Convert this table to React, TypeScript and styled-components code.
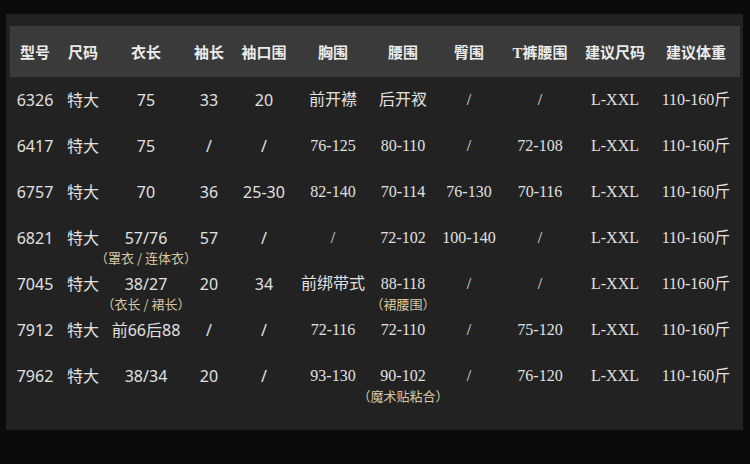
import React from 'react';
import styled, { createGlobalStyle } from 'styled-components';

const GlobalStyle = createGlobalStyle`
  html, body {
    margin: 0;
    padding: 0;
    background: #0b0b0b;
  }
  body {
    width: 750px;
    height: 464px;
    overflow: hidden;
  }
`;

const Page = styled.div`
  width: 750px;
  height: 464px;
  padding: 14px 7px 0 6px;
  box-sizing: border-box;
`;

const Panel = styled.div`
  width: 737px;
  height: 416px;
  background: #222222;
  padding: 12px 3px 0 4px;
  box-sizing: border-box;
`;

const COLS = '50px 46px 80px 46px 64px 74px 66px 66px 76px 74px 88px';

const HeaderRow = styled.div`
  display: grid;
  grid-template-columns: ${COLS};
  height: 51px;
  align-items: center;
  background: #3a3a3a;
`;

const HeaderCell = styled.div`
  text-align: center;
  white-space: nowrap;
  font-family: 'Liberation Serif', 'Noto Sans CJK SC', serif;
  font-weight: 700;
  font-size: 15px;
  color: #ececec;
`;

const Row = styled.div`
  display: grid;
  grid-template-columns: ${COLS};
  height: 46px;
`;

const Cell = styled.div<{ $serif?: boolean }>`
  display: flex;
  flex-direction: column;
  align-items: center;
  padding-top: 12px;
  white-space: nowrap;
  font-family: ${(p) =>
    p.$serif
      ? "'Liberation Serif', 'Noto Sans CJK SC', serif"
      : "'Noto Sans', 'Noto Sans CJK SC', sans-serif"};
  font-size: 16px;
  line-height: 22px;
  color: #e0e0e0;
`;

const Note = styled.span`
  margin-top: 1px;
  font-family: 'Noto Sans CJK SC', sans-serif;
  font-size: 13px;
  line-height: 15px;
  color: #d6c8a6;
`;

const headers = ['型号', '尺码', '衣长', '袖长', '袖口围', '胸围', '腰围', '臀围', 'T裤腰围', '建议尺码', '建议体重'];

type Value = string | { v: string; note: string };

const rows: Value[][] = [
  ['6326', '特大', '75', '33', '20', '前开襟', '后开衩', '/', '/', 'L-XXL', '110-160斤'],
  ['6417', '特大', '75', '/', '/', '76-125', '80-110', '/', '72-108', 'L-XXL', '110-160斤'],
  ['6757', '特大', '70', '36', '25-30', '82-140', '70-114', '76-130', '70-116', 'L-XXL', '110-160斤'],
  ['6821', '特大', { v: '57/76', note: '（罩衣 / 连体衣）' }, '57', '/', '/', '72-102', '100-140', '/', 'L-XXL', '110-160斤'],
  ['7045', '特大', { v: '38/27', note: '（衣长 / 裙长）' }, '20', '34', '前绑带式', { v: '88-118', note: '（裙腰围）' }, '/', '/', 'L-XXL', '110-160斤'],
  ['7912', '特大', '前66后88', '/', '/', '72-116', '72-110', '/', '75-120', 'L-XXL', '110-160斤'],
  ['7962', '特大', '38/34', '20', '/', '93-130', { v: '90-102', note: '（魔术贴粘合）' }, '/', '76-120', 'L-XXL', '110-160斤'],
];

export default function App() {
  return (
    <>
      <GlobalStyle />
      <Page>
        <Panel>
          <HeaderRow>
            {headers.map((h) => (
              <HeaderCell key={h}>{h}</HeaderCell>
            ))}
          </HeaderRow>
          {rows.map((r, i) => (
            <Row key={i}>
              {r.map((c, j) =>
                typeof c === 'string' ? (
                  <Cell key={j} $serif={j >= 5}>{c}</Cell>
                ) : (
                  <Cell key={j} $serif={j >= 5}>
                    {c.v}
                    <Note>{c.note}</Note>
                  </Cell>
                )
              )}
            </Row>
          ))}
        </Panel>
      </Page>
    </>
  );
}
